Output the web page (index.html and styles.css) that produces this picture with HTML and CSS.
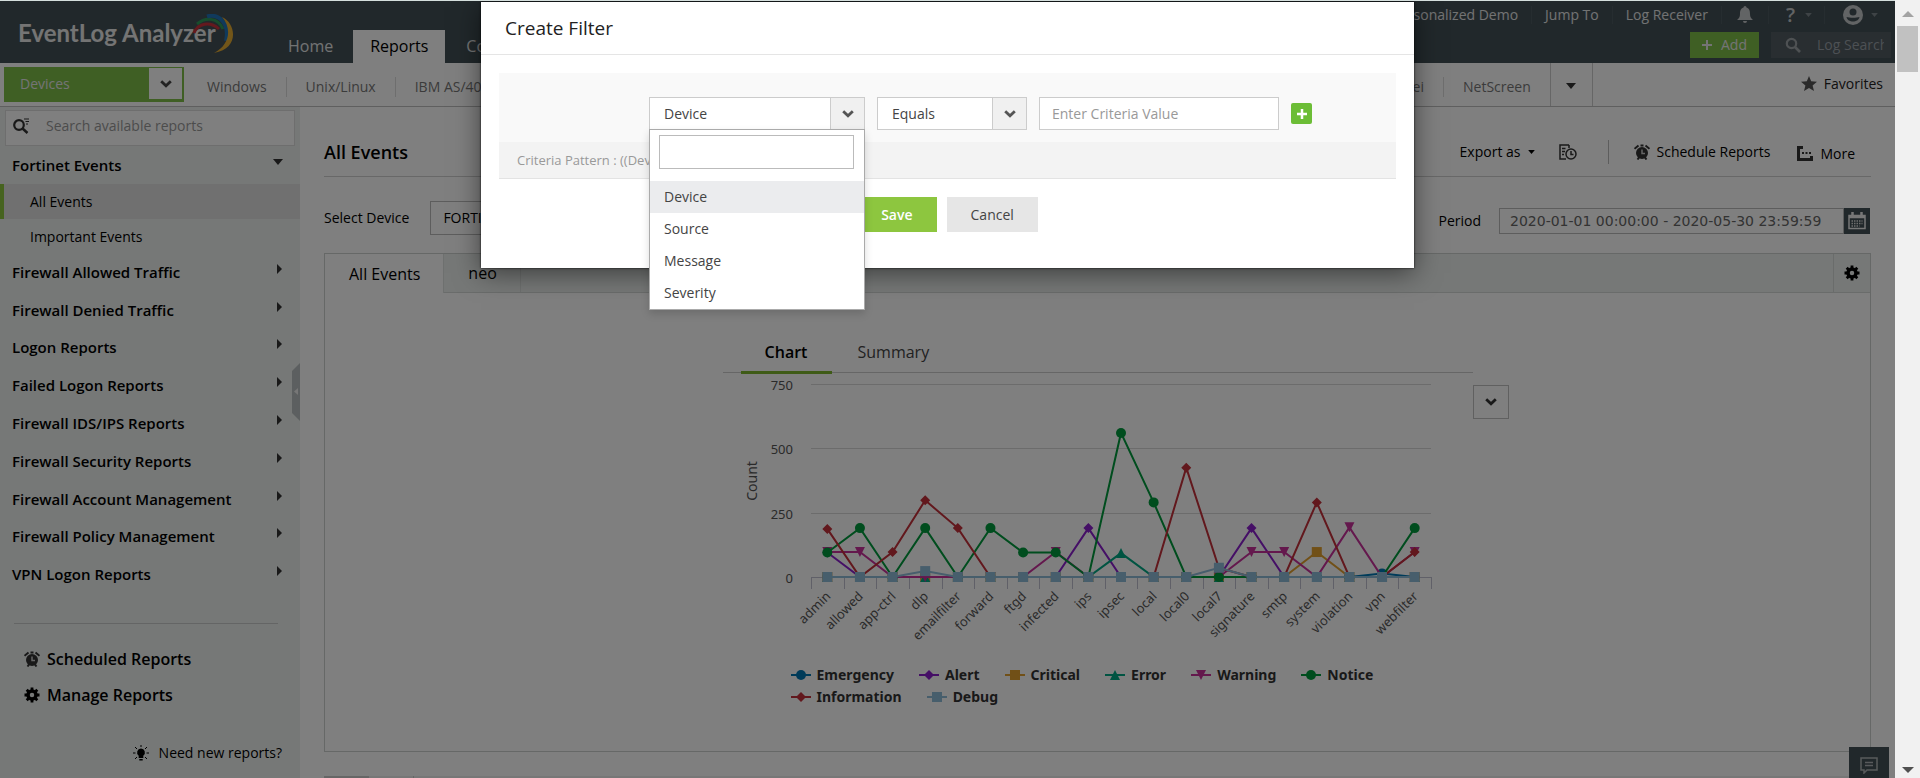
FILE: index.html
```html
<!DOCTYPE html>
<html lang="en">
<head>
<meta charset="utf-8">
<title>EventLog Analyzer - Reports</title>
<link rel="stylesheet" href="styles.css">
</head>
<body>
<svg class="defs" aria-hidden="true">
  <symbol id="chev" viewBox="0 0 12 8"><path d="M1.2 1.2 6 5.8l4.800-4.600" fill="none" stroke="currentColor" stroke-width="2.800"/></symbol>
  <symbol id="caret" viewBox="0 0 10 6"><path d="M0 0h10L5 6z" fill="currentColor"/></symbol>
  <symbol id="right" viewBox="0 0 5 10"><path d="M0 0l5 5-5 5z" fill="currentColor"/></symbol>
  <symbol id="alarm" viewBox="0 0 16 16"><circle cx="8" cy="9" r="6" fill="currentColor"/><path d="M.5 4.800 4.500 1.500M15.500 4.800l-4-3.300M3.500 15.500l1.500-2M12.500 15.500l-1.500-2M6.500 1.500h3" stroke="currentColor" stroke-width="2" fill="none"/><path d="M8 5.500V9.500h3" stroke="#ccc" stroke-width="1.500" fill="none"/></symbol>
  <symbol id="gear" viewBox="0 0 16 16"><circle cx="8" cy="8" r="4" fill="none" stroke="currentColor" stroke-width="3.500"/><path d="M8 .5v3M8 12.500v3M.5 8h3M12.500 8h3M2.700 2.700l2 2M11.300 11.300l2 2M13.300 2.700l-2 2M4.700 11.300l-2 2" stroke="currentColor" stroke-width="2.800"/></symbol>
  <symbol id="search" viewBox="0 0 16 16"><circle cx="6.500" cy="6.500" r="4.700" fill="none" stroke="currentColor" stroke-width="2.200"/><path d="M10 10l5 5" stroke="currentColor" stroke-width="2.600"/></symbol>
  <symbol id="m-circle" viewBox="0 0 20 10"><path d="M0 5h20" stroke="currentColor" stroke-width="2"/><circle cx="10" cy="5" r="5" fill="currentColor"/></symbol>
  <symbol id="m-diamond" viewBox="0 0 20 10"><path d="M0 5h20" stroke="currentColor" stroke-width="2"/><path d="M10 0l5 5-5 5-5-5z" fill="currentColor"/></symbol>
  <symbol id="m-square" viewBox="0 0 20 10"><path d="M0 5h20" stroke="currentColor" stroke-width="2"/><path d="M5 0h10v10H5z" fill="currentColor"/></symbol>
  <symbol id="m-up" viewBox="0 0 20 10"><path d="M0 5h20" stroke="currentColor" stroke-width="2"/><path d="M10 0l5 10H5z" fill="currentColor"/></symbol>
  <symbol id="m-down" viewBox="0 0 20 10"><path d="M0 5h20" stroke="currentColor" stroke-width="2"/><path d="M5 0h10l-5 10z" fill="currentColor"/></symbol>
</svg>
<div class="shell">
<div class="page">
  <header class="top">
    <a class="logo" href="#"><span>EventLog Analyzer</span>
      <svg viewBox="0 0 42 40" width="42" height="40" aria-hidden="true"><g fill="none"><path d="M2 19C6 9 18 7 27 15" stroke="#c8323c" stroke-width="3"/><path d="M5 10C13 3 26 3 31 15" stroke="#2f9a5b" stroke-width="3"/><path d="M15 2.500C27-1 38 10 34 27" stroke="#2074b8" stroke-width="4"/></g><path d="M30 3C44 9 48 35 22 39 38 31 40 14 30 3z" fill="#e5ac33"/></svg>
    </a>
    <nav class="main-nav"><a href="#">Home</a><a href="#" class="on">Reports</a><a href="#">Compliance</a></nav>
    <div class="tools">
      <div class="links">
        <a href="#">Personalized Demo</a><a href="#">Jump To</a><a href="#">Log Receiver</a>
        <a href="#" class="i bell" aria-label="Alerts"><svg viewBox="0 0 16 18" width="16" height="18"><path d="M8 0a1.500 1.500 0 0 1 1.500 1.500C12.500 2.500 13 5 13 8c0 3 1 4 3 6H0c2-2 3-3 3-6 0-3 .5-5.500 3.500-6.500A1.500 1.500 0 0 1 8 0zM6 15h4a2 2 0 0 1-4 0z" fill="currentColor"/></svg></a>
        <a href="#" class="i help" aria-label="Help"><b>?</b><svg width="7" height="4"><use href="#caret"/></svg></a>
        <a href="#" class="i user" aria-label="Account"><svg viewBox="0 0 20 20" width="20" height="20"><circle cx="10" cy="10" r="10" fill="currentColor"/><circle cx="10" cy="7" r="3.500" fill="#435056"/><path d="M3.500 12c3 1 10 1 13 0-1 6-12 6-13 0z" fill="#435056"/></svg><svg width="7" height="4"><use href="#caret"/></svg></a>
      </div>
      <div class="actions">
        <button class="add"><svg viewBox="0 0 10 10" width="10" height="10"><path d="M5 0v10M0 5h10" stroke="currentColor" stroke-width="2"/></svg>Add</button>
        <label class="logsearch"><svg width="16" height="16"><use href="#search"/></svg><input type="text" placeholder="Log Search" aria-label="Log Search"></label>
      </div>
    </div>
  </header>

  <div class="subbar">
    <button class="devices"><span>Devices</span><i><svg width="12" height="8"><use href="#chev"/></svg></i></button>
    <nav class="sub-nav"><a href="#">Windows</a><a href="#">Unix/Linux</a><a href="#">IBM AS/400</a></nav>
    <nav class="sub-nav end"><a href="#">Huawei</a><a href="#">NetScreen</a></nav>
    <button class="morecaret" aria-label="More devices"><svg width="10" height="6"><use href="#caret"/></svg></button>
    <a class="fav" href="#"><svg viewBox="0 0 16 15" width="16" height="15"><path d="M8 0l2.200 5.200 5.800.5-4.400 3.700L13 15l-5-3-5 3 1.400-5.600L0 5.700l5.800-.5z" fill="currentColor"/></svg>Favorites</a>
  </div>

  <div class="body">
    <aside class="side">
      <label class="find"><svg viewBox="0 0 16 16" width="16" height="16"><circle cx="6" cy="7" r="4.800" fill="none" stroke="currentColor" stroke-width="2.200"/><path d="M9 10l5.500 5" stroke="currentColor" stroke-width="2.500"/><path d="M11 1h5M12.500 3.500H16M13 6h2" stroke="currentColor"/></svg><input type="text" placeholder="Search available reports" aria-label="Search available reports"></label>
      <a class="group first" href="#">Fortinet Events<svg width="10" height="6"><use href="#caret"/></svg></a>
      <a class="leaf on" href="#">All Events</a>
      <a class="leaf" href="#">Important Events</a>
      <div class="groups">
        <a class="group" href="#">Firewall Allowed Traffic<svg width="5" height="10"><use href="#right"/></svg></a>
        <a class="group" href="#">Firewall Denied Traffic<svg width="5" height="10"><use href="#right"/></svg></a>
        <a class="group" href="#">Logon Reports<svg width="5" height="10"><use href="#right"/></svg></a>
        <a class="group" href="#">Failed Logon Reports<svg width="5" height="10"><use href="#right"/></svg></a>
        <a class="group" href="#">Firewall IDS/IPS Reports<svg width="5" height="10"><use href="#right"/></svg></a>
        <a class="group" href="#">Firewall Security Reports<svg width="5" height="10"><use href="#right"/></svg></a>
        <a class="group" href="#">Firewall Account Management<svg width="5" height="10"><use href="#right"/></svg></a>
        <a class="group" href="#">Firewall Policy Management<svg width="5" height="10"><use href="#right"/></svg></a>
        <a class="group" href="#">VPN Logon Reports<svg width="5" height="10"><use href="#right"/></svg></a>
      </div>
      <div class="extra">
        <a href="#"><svg width="16" height="16" color="#333"><use href="#alarm"/></svg>Scheduled Reports</a>
        <a href="#"><svg width="16" height="16"><use href="#gear"/></svg>Manage Reports</a>
      </div>
      <a class="need" href="#"><svg viewBox="0 0 16 16" width="16" height="16"><path d="M8 3.500a4 4 0 0 1 2.300 7.200V13H5.700v-2.300A4 4 0 0 1 8 3.500zM6.300 14h3.400v1.500H6.300z" fill="currentColor"/><path d="M8 0v2M0 8h2.500M13.500 8H16M2 2l2 2M14 2l-2 2M2 14l2-2M14 14l-2-2" stroke="currentColor"/></svg>Need new reports?</a>
      <button class="collapse" aria-label="Collapse"><svg viewBox="0 0 8 58" width="8" height="58"><path d="M8 0v58L0 50V8z" fill="#b9bfc0"/><path d="M6 25v7l-4-3.500z" fill="#eee"/></svg></button>
    </aside>

    <main class="main">
      <div class="title">
        <h1>All Events</h1>
        <a href="#">Export as<svg class="sm" width="7" height="4"><use href="#caret"/></svg></a>
        <a href="#" class="hist" aria-label="Export history"><svg viewBox="0 0 18 16" width="18" height="16"><g fill="none" stroke="#333" stroke-width="1.500"><path d="M10 1H1v14h6M10 1v3M3 4.500h3.500M3 7.500h3M3 10.500h2"/><circle cx="12" cy="10" r="5"/><path d="M12 7v3.500h2.500"/></g></svg></a>
        <a href="#" class="sched"><svg width="16" height="16" color="#333"><use href="#alarm"/></svg>Schedule Reports</a>
        <a href="#" class="more"><svg viewBox="0 0 16 16" width="16" height="16"><path d="M6 1.500H1.500v12h13V10" fill="none" stroke="#333" stroke-width="3"/><path d="M5 7h2M8.500 7h2M12 7h2" stroke="#333" stroke-width="2"/></svg>More</a>
      </div>
      <div class="filters">
        <label for="dev">Select Device</label>
        <select id="dev"><option>FORTIGATE</option></select>
        <div class="period">
          <label for="per">Period</label>
          <input id="per" type="text" value="2020-01-01 00:00:00 - 2020-05-30 23:59:59">
          <button class="cal" aria-label="Calendar"><svg viewBox="0 0 18 18" width="18" height="18"><path d="M1 3.500h16v13H1z" fill="none" stroke="#eee" stroke-width="1.500"/><path d="M4.500 0v5M13.500 0v5M1 5h16" stroke="#eee" stroke-width="2.500"/><path d="M3.500 9h11M3.500 11.500h11M3.500 14h8" stroke="#ddd" stroke-width="1.500" stroke-dasharray="1.500 1"/></svg></button>
        </div>
      </div>
      <section class="panel">
        <div class="tabs"><button class="on">All Events</button><button>neo</button><button class="cog" aria-label="Settings"><svg width="16" height="16"><use href="#gear"/></svg></button></div>
        <div class="chartgrid">
          <div class="chartcol">
            <div class="ctabs"><button class="on">Chart</button><button>Summary</button></div>
            <svg id="chart" class="chart" viewBox="0 0 750 284" role="img" aria-label="Event count by type"></svg>
            <ul class="legend">
              <li><svg color="#0077b3"><use href="#m-circle"/></svg>Emergency</li>
              <li><svg color="#8a1fcc"><use href="#m-diamond"/></svg>Alert</li>
              <li><svg color="#e3a12f"><use href="#m-square"/></svg>Critical</li>
              <li><svg color="#00a884"><use href="#m-up"/></svg>Error</li>
              <li><svg color="#c8309b"><use href="#m-down"/></svg>Warning</li>
              <li><svg color="#009a3c"><use href="#m-circle"/></svg>Notice</li>
              <li><svg color="#c4303a"><use href="#m-diamond"/></svg>Information</li>
              <li><svg color="#8fbcd9"><use href="#m-square"/></svg>Debug</li>
            </ul>
          </div>
          <button class="ctype" aria-label="Chart type"><svg width="12" height="8"><use href="#chev"/></svg></button>
        </div>
      </section>
      <div class="below"><span></span><span></span></div>
    </main>
  </div>
  <button class="chat" aria-label="Chat"><svg viewBox="0 0 18 17" width="18" height="17"><path d="M1 1h16v12H7l-3 3v-3H1z" fill="none" stroke="currentColor" stroke-width="1.500"/><path d="M5 5.500h8M5 8.500h8" stroke="currentColor" stroke-width="1.500"/></svg></button>

  <div class="backdrop">
    <div class="modal" role="dialog" aria-labelledby="mt">
      <h2 id="mt">Create Filter</h2>
      <div class="mbody">
        <div class="criteria">
          <div class="dd field"><select aria-label="Field"><option>Device</option></select><i><svg width="12" height="8"><use href="#chev"/></svg></i>
            <div class="menu">
              <input type="text" aria-label="Filter options">
              <ul><li class="on">Device</li><li>Source</li><li>Message</li><li>Severity</li></ul>
            </div>
          </div>
          <div class="dd op"><select aria-label="Operator"><option>Equals</option></select><i><svg width="12" height="8"><use href="#chev"/></svg></i></div>
          <input class="val" type="text" placeholder="Enter Criteria Value" aria-label="Criteria value">
          <button class="plus" aria-label="Add criteria"><svg viewBox="0 0 10 10" width="10" height="10"><path d="M5 0v10M0 5h10" stroke="#fff" stroke-width="2.500"/></svg></button>
        </div>
        <p class="pattern">Criteria Pattern : ((Device = ))</p>
        <div class="btns"><button class="save">Save</button><button class="cancel">Cancel</button></div>
      </div>
    </div>
  </div>
</div>
<div class="scroll"><svg width="12" height="6" viewBox="0 0 12 6"><path d="M0 6h12L6 0z" fill="#a3a3a3"/></svg><div class="thumb"></div><svg class="dn" width="12" height="6" viewBox="0 0 12 6"><path d="M0 0h12L6 6z" fill="#505050"/></svg></div>
</div>
<script src="chart.js"></script>
</body>
</html>
```

FILE: styles.css
```css
* { box-sizing: border-box; }
body { margin: 0; font-family: "Open Sans", "Noto Sans", sans-serif; font-size: 14px; line-height: 20px; color: #000; }
a { color: inherit; text-decoration: none; }
button, input, select { font: inherit; color: inherit; margin: 0; padding: 0; border: 0; border-radius: 0; background: none; appearance: none; outline: none; }
h1, h2, p, ul { margin: 0; padding: 0; list-style: none; }
svg { flex: none; display: block; }
.defs { position: absolute; width: 0; height: 0; }
.shell { display: flex; height: 100vh; overflow: hidden; }
.page { flex: 1; min-width: 0; position: relative; display: flex; flex-direction: column; overflow: hidden; border-top: 1px solid #d5dfdd; background: #fff; }

.top { display: flex; flex: none; height: 62px; background: #435056; color: #e4e6e7; }
.logo { display: flex; width: 288px; padding: 17px 0 0 18px; font: 700 24px/30px Lato, sans-serif; color: #e8e8e8; }
.logo span { white-space: nowrap; }
.logo svg { margin: -4px 0 0 -24px; }
.main-nav { display: flex; align-items: flex-end; font-size: 16px; }
.main-nav a { height: 33px; padding: 5px 17px 0; line-height: 22px; }
.main-nav a:first-child { padding: 5px 20px 0 0; }
.main-nav .on { background: #fff; color: #000; }
.main-nav a:last-child { padding-left: 21px; }
.tools { margin-left: auto; display: flex; flex-direction: column; align-items: flex-end; }
.links { display: flex; height: 28px; margin-bottom: 3px; align-items: center; white-space: nowrap; }
.links a { display: flex; align-items: center; height: 18px; padding: 0 13px; border-right: 1px solid #4d5a60; }
.links .i { gap: 8px; color: #c5c8ca; }
.links .bell { padding: 0 15px; }
.links .help { padding: 0 12px 0 17px; gap: 10px; }
.links .help b { font-size: 20px; font-weight: 600; }
.links .user { padding: 0 17px 0 18px; border: 0; }
.links .i svg[width="7"] { color: #7d878c; }
.actions { display: flex; gap: 12px; padding-right: 4px; }
.add { display: flex; align-items: center; justify-content: center; gap: 9px; width: 69px; height: 26px; background: #7ebe48; color: #e8e8e8; }
.logsearch { display: flex; align-items: center; gap: 16px; width: 120px; height: 26px; padding-left: 14px; background: #525c63; color: #9da3a6; }
.logsearch input { width: 67px; }
.logsearch input::placeholder { color: #9aa1a8; opacity: 1; }

.subbar { display: flex; flex: none; height: 44px; border-bottom: 1px solid #bfbfbf; color: #777; }
.devices { display: flex; width: 180px; height: 35px; margin: 4px 0 0 4px; border: 1px solid #7ebe48; border-right-width: 2px; border-bottom-width: 3px; background: #7ebe48; color: #e8e8e8; text-align: left; line-height: 32px; }
.devices span { flex: 1; padding-left: 15px; }
.devices i { display: flex; width: 33px; align-items: center; justify-content: center; background: #fff; color: #444; }
.sub-nav { display: flex; align-items: center; padding: 4px 0 0 4px; white-space: nowrap; }
.sub-nav a { padding: 0 19px; border-right: 1px solid #ddd; }
.sub-nav a:last-child { border: 0; }
.sub-nav.end { margin-left: auto; padding-left: 0; }
.morecaret { display: flex; align-items: center; justify-content: center; width: 43px; border: solid #ccc; border-width: 0 1px; color: #333; padding-top: 2px; }
.fav { display: flex; align-items: center; gap: 7px; margin-left: 208px; padding: 0 12px 2px 0; color: #222; }
.fav svg { color: #555; }

.body { display: flex; flex: 1; min-height: 0; }
.side { position: relative; flex: none; width: 300px; background: #edf1ef; }
.find { display: flex; align-items: center; gap: 17px; height: 36px; margin: 3px 5px 0; padding: 0 0 5px 7px; border: 1px solid #ddd; background: #fff; color: #333; }
.find input { flex: 1; }
.find input::placeholder { color: #999; opacity: 1; }
.group { display: flex; align-items: center; justify-content: space-between; padding: 0 17px 0 12px; font-size: 15px; font-weight: 600; }
.group svg { color: #333; margin-bottom: 6px; }
.first { height: 38px; }
.leaf { display: block; height: 35px; padding-left: 30px; line-height: 36px; }
.leaf.on { border-left: 4px solid #8dc63f; padding-left: 26px; background: #e0e1e1; }
.groups { display: grid; grid-auto-rows: 1fr; height: 340px; margin-top: -1px; }
.groups .group { padding-right: 18px; }
.extra { margin: 30px 22px 0 14px; padding-top: 17px; border-top: 1px solid #c8caca; font-size: 16px; font-weight: 600; }
.extra a { display: flex; align-items: center; gap: 7px; height: 36px; padding-left: 10px; }
.need { display: flex; align-items: center; justify-content: flex-end; gap: 10px; padding-right: 18px; margin-top: 30px; }
.collapse { position: absolute; right: 0; top: 256px; }

.main { flex: 1; min-width: 0; padding: 0 24px; display: flex; flex-direction: column; }
.title { flex: none; display: flex; align-items: center; height: 70px; padding: 20px 16px 0 0; border-bottom: 1px solid #d0d0d0; }
h1 { flex: 1; font-size: 18px; line-height: 24px; font-weight: 600; }
.title a { display: flex; align-items: center; gap: 7px; }
.title .hist { margin-left: 24px; padding-right: 31px; border-right: 1px solid #bbb; height: 24px; }
.title .sched { margin-left: 25px; }
.title .more { margin: 4px 0 0 27px; }
.filters { flex: none; display: flex; align-items: center; height: 76px; padding-top: 6px; }
.filters select { width: 220px; height: 34px; margin-left: 21px; padding-left: 12px; border: 1px solid #bbb; }
.period { display: flex; align-items: center; margin-left: auto; padding: 6px 1px 0 0; }
.period label { margin-right: 18px; }
.period input { width: 345px; height: 26px; padding-left: 10px; border: 1px solid #bbb; font: 14px "DejaVu Sans", sans-serif; color: #666; }
.cal { display: flex; align-items: center; justify-content: center; width: 26px; height: 26px; background: #435056; }
.panel { flex: none; height: 499px; border: 1px solid #ccd0ce; }
.tabs { display: flex; height: 39px; background: #edf1ef; border-bottom: 1px solid #d5d8d7; font-size: 16px; }
.tabs button { padding: 0 23px 0 24px; border-right: 1px solid #dde0df; }
.tabs .on { height: 39px; background: #fff; border-bottom: 0; }
.tabs .cog { display: flex; align-items: center; margin-left: auto; padding: 0 10px; border: 0; border-left: 1px solid #d5d8d7; }
.chartgrid { display: grid; grid-template-columns: 1fr 750px 1fr; align-items: start; padding-top: 38px; }
.chartcol { grid-column: 2; }
.ctabs { display: flex; height: 42px; padding-left: 18px; border-bottom: 1px solid #ccc; font-size: 16px; color: #444; }
.ctabs button { height: 42px; padding: 0 26px; }
.ctabs .on { width: 91px; height: 43px; padding: 2px 0 0; border-bottom: 3px solid #7eb62e; font-weight: 600; color: #000; }
.chart { width: 100%; height: auto; font: 13px "Noto Sans", "Open Sans", sans-serif; }
.legend { display: flex; flex-wrap: wrap; gap: 2px 25px; margin-top: 8px; padding: 0 75px 0 68px; font: 700 14px/20px "Noto Sans", sans-serif; color: #333; }
.legend li { display: flex; align-items: center; gap: 6px; }
.legend svg { width: 20px; height: 10px; }
.ctype { display: flex; align-items: center; justify-content: center; width: 36px; height: 34px; margin-top: 54px; border: 1px solid #c0c0c0; color: #333; }
.below { display: flex; flex: none; height: 10px; margin-top: 24px; background: #eee; }
.below span { width: 45px; border-right: 1px solid #ccc; }
.below span:first-child { background: #ccc; }
.chat { position: absolute; right: 6px; bottom: 0; display: flex; justify-content: center; width: 40px; height: 31px; padding-top: 10px; background: #435056; color: #b0b5b8; }

.backdrop { position: absolute; inset: 0; display: flex; justify-content: center; align-items: flex-start; background: rgba(0, 0, 0, .5); }
.modal { width: 933px; margin-top: 1px; background: #fff; box-shadow: 0 0 2px rgba(0, 0, 0, .9), 0 5px 25px rgba(0, 0, 0, .5); color: #444; }
h2 { height: 53px; padding: 14px 24px 0; border-bottom: 1px solid #e5e5e5; font-size: 19px; line-height: 24px; font-weight: 400; color: #222; }
.mbody { padding: 18px 18px 36px; }
.criteria { display: flex; align-items: center; height: 69px; padding: 12px 0 0 150px; background: #f9f9f9; }
.dd { position: relative; display: flex; height: 33px; border: 1px solid #ccc; background: #fff; }
.dd select { flex: 1; padding-left: 14px; }
.dd i { display: flex; align-items: center; justify-content: center; width: 34px; border-left: 1px solid #ccc; background: #f0f0f0; color: #555; }
.field { width: 216px; }
.op { width: 150px; margin-left: 12px; }
.val { width: 240px; height: 33px; margin-left: 12px; padding-left: 12px; border: 1px solid #ccc; background: #fff; }
.val::placeholder { color: #999; opacity: 1; }
.plus { display: flex; align-items: center; justify-content: center; width: 21px; height: 21px; margin-left: 12px; border-radius: 2px; background: #6cbd36; }
.menu { position: absolute; z-index: 2; top: 31px; left: -1px; right: -1px; padding: 5px 0 0; border: 1px solid #aaa; background: #fff; box-shadow: 0 4px 8px rgba(0, 0, 0, .15); }
.menu input { display: block; width: calc(100% - 19px); height: 34px; margin: 0 10px 12px 9px; border: 1px solid #bbb; }
.menu li { height: 32px; padding-left: 14px; line-height: 32px; }
.menu .on { background: #ebecee; }
.pattern { height: 37px; padding: 0 18px; line-height: 36px; background: #f3f3f3; border-bottom: 1px solid #e3e3e3; color: #999; font-size: 13px; }
.btns { display: flex; justify-content: center; gap: 10px; margin-top: 18px; }
.btns button { height: 35px; padding: 0 24px; background: #e6e6e6; }
.btns .save { background: #8dc63f; color: #fff; font-weight: 600; }

.scroll { display: flex; flex-direction: column; align-items: center; width: 25px; padding: 11px 0 5px; background: #f1f1f1; }
.thumb { width: 21px; height: 46px; margin-top: 9px; background: #c1c1c1; }
.dn { margin-top: auto; }
```

FILE: chart.js
```js
(function () {
  var names = ['admin', 'allowed', 'app-ctrl', 'dlp', 'emailfilter', 'forward', 'ftgd', 'infected', 'ips', 'ipsec', 'local', 'local0', 'local7', 'signature', 'smtp', 'system', 'violation', 'vpn', 'webfilter'];
  var series = [
    ['#0077b3', 'circle', { 17: 14 }],
    ['#8a1fcc', 'diamond', { 0: 95, 8: 190, 13: 190 }],
    ['#e3a12f', 'square', { 15: 97 }],
    ['#00a884', 'up', { 9: 93 }],
    ['#c8309b', 'down', { 0: 97, 1: 97, 7: 97, 13: 97, 14: 97, 16: 193, 18: 97 }],
    ['#009a3c', 'circle', { 0: 95, 1: 190, 3: 190, 5: 190, 6: 95, 7: 95, 9: 560, 10: 290, 18: 190 }],
    ['#c4303a', 'diamond', { 0: 187, 2: 97, 3: 298, 4: 190, 11: 425, 12: 35, 15: 290, 18: 97 }],
    ['#8fbcd9', 'square', { 3: 23, 12: 36 }]
  ];
  var left = 88, width = 620, base = 204, step = width / names.length, out = '';
  function y(v) { return base - v * 0.2573; }
  function shape(kind, px, py) {
    if (kind === 'circle') return '<circle cx="' + px + '" cy="' + py + '" r="5"/>';
    var d = { diamond: 'm0-5l5 5-5 5-5-5z', square: 'm-5-5h10v10h-10z', up: 'm0-5l5 10h-10z', down: 'm-5-5h10l-5 10z' }[kind];
    return '<path d="M' + px + ' ' + py + d + '"/>';
  }
  [750, 500, 250, 0].forEach(function (v) {
    var gy = Math.round(y(v)) + 0.5;
    out += '<path d="M' + left + ' ' + gy + 'h' + width + '" stroke="' + (v ? '#d8d8d8' : '#c0c0d0') + '"/>';
    out += '<text x="70" y="' + (gy + 5) + '" text-anchor="end" fill="#555">' + v + '</text>';
  });
  for (var t = 0; t <= names.length; t++) {
    out += '<path d="M' + (Math.round(left + t * step) + 0.5) + ' ' + base + 'v12" stroke="#c0c0d0"/>';
  }
  out += '<text transform="translate(34 108) rotate(-90)" text-anchor="middle" fill="#555" font-size="14">Count</text>';
  names.forEach(function (n, i) {
    var px = left + (i + 0.5) * step + 4;
    out += '<text transform="translate(' + px + ' 224) rotate(-45)" text-anchor="end" fill="#555">' + n + '</text>';
  });
  series.forEach(function (s) {
    var pts = names.map(function (n, i) { return [left + (i + 0.5) * step, y(s[2][i] || 0)]; });
    out += '<polyline fill="none" stroke-width="2" stroke="' + s[0] + '" points="' + pts.join(' ') + '"/>';
    out += '<g fill="' + s[0] + '">' + pts.map(function (p) { return shape(s[1], p[0], p[1]); }).join('') + '</g>';
  });
  document.getElementById('chart').innerHTML = out;
})();
```
